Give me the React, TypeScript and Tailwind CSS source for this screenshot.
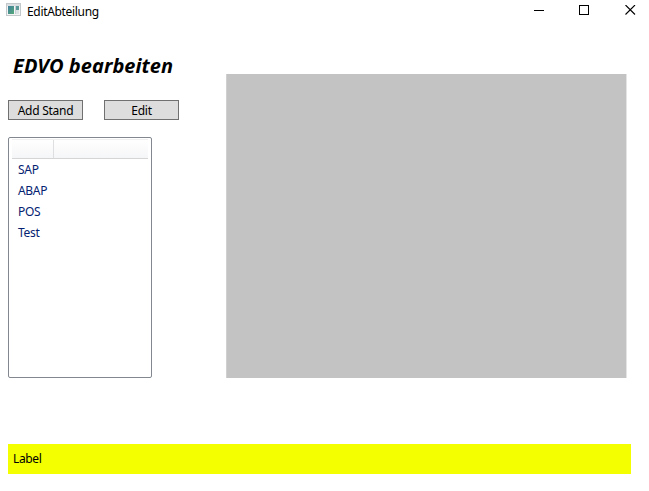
import type { ReactNode } from "react";

const items = ["SAP", "ABAP", "POS", "Test"];

function AppIcon() {
  return (
    <svg width="16" height="14" viewBox="0 0 16 14" shapeRendering="crispEdges">
      <defs>
        <linearGradient id="pane" x1="0" y1="0" x2="1" y2="1">
          <stop offset="0" stopColor="#3f7f9e" />
          <stop offset="1" stopColor="#55a878" />
        </linearGradient>
      </defs>
      <rect x="0.5" y="0.5" width="14" height="12" fill="#f4f4f4" stroke="#c3c8cb" />
      <rect x="1" y="1" width="13" height="2" fill="#dcdfe1" />
      <rect x="2" y="3" width="6" height="8" fill="url(#pane)" />
      <rect x="9" y="3" width="1" height="8" fill="#c3ced4" />
      <rect x="10" y="3" width="3" height="4" fill="#5c9a9a" />
      <rect x="10" y="7" width="3" height="4" fill="#dbe2e4" />
    </svg>
  );
}

function TitleBar() {
  return (
    <header className="flex h-[22px] items-start pl-[6px]">
      <div className="mt-[3px]">
        <AppIcon />
      </div>
      <span className="mt-[3px] ml-[5px] text-[12px] leading-[17px] tracking-[-0.32px]">EditAbteilung</span>
      <div className="mt-[5px] mr-[13px] ml-auto flex">
        <svg width="11" height="11" shapeRendering="crispEdges">
          <path d="M0 5.5H10" stroke="#000" />
        </svg>
        <svg className="ml-[34px]" width="10" height="10" shapeRendering="crispEdges">
          <rect x="0.5" y="0.5" width="9" height="9" fill="none" stroke="#000" />
        </svg>
        <svg className="ml-9" width="11" height="10">
          <path d="M.5 0L10 9.5M10 0L.5 9.5" stroke="#000" strokeWidth="1.1" />
        </svg>
      </div>
    </header>
  );
}

function Button({ children }: { children: ReactNode }) {
  return (
    <button className="flex h-5 w-[75px] items-center justify-center border border-[#707070] bg-[#dddddd] pt-[2px] text-[12px] leading-4 tracking-[-0.25px] whitespace-nowrap">
      {children}
    </button>
  );
}

export default function App() {
  return (
    <div className="h-[491px] w-[649px] overflow-hidden bg-white font-['Noto_Sans','Open_Sans',sans-serif] text-black">
      <TitleBar />
      <main className="pl-2">
        <div className="flex h-[356px]">
          <section className="w-[218px]">
            <h1 className="ml-[5px] pt-[30px] text-[20px] leading-7 font-bold tracking-[0.05px] whitespace-nowrap italic">
              EDVO bearbeiten
            </h1>
            <div className="mt-5 flex gap-[21px]">
              <Button>Add Stand</Button>
              <Button>Edit</Button>
            </div>
            <div className="mt-[17px] h-[241px] w-36 rounded-[2px] border border-[#828790] px-[3px] pt-px">
              <div className="flex h-5 border-t border-b border-t-[#f0f0f0] border-b-[#d5d5d5] bg-linear-to-b from-white to-[#f5f6f7]">
                <div className="w-[42px] border-r border-[#dedfe1]" />
              </div>
              <ul className="pl-[6px] text-[12px] tracking-[-0.3px] text-[#042271]">
                {items.map((item) => (
                  <li key={item} className="h-[21px] leading-[22px]">
                    {item}
                  </li>
                ))}
              </ul>
            </div>
          </section>
          <section className="mt-[52px] h-[304px] w-[401px] border-r border-l border-r-[#e4e4e4] border-l-[#d0d0d0] bg-[#c3c3c3]" />
        </div>
        <footer className="mt-[66px] h-[30px] w-[623px] bg-[#f4ff00] pt-[6px] pl-[5px] text-[12px] leading-[17px] tracking-[-0.35px]">
          Label
        </footer>
      </main>
    </div>
  );
}
